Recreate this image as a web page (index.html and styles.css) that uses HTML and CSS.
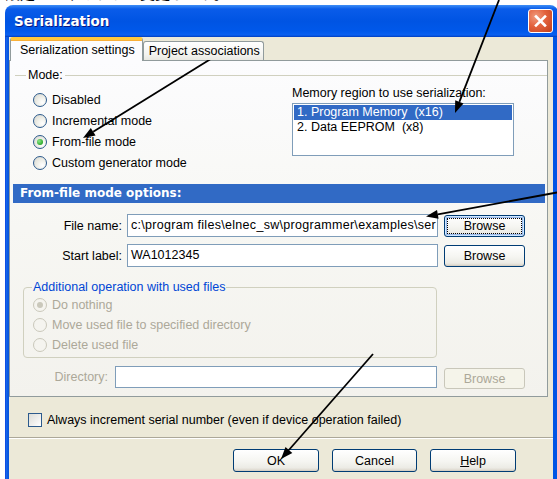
FILE: index.html
```html
<!DOCTYPE html>
<html lang="en">
<head>
<meta charset="utf-8">
<title>Serialization</title>
<link rel="stylesheet" href="styles.css">
</head>
<body>
<div class="screen">
  <div class="note"><span>設定は以下のように変更します。</span></div>
  <div class="window">
    <div class="titlebar">
      <span class="title">Serialization</span>
      <span class="close">
        <svg viewBox="0 0 25 24" width="25" height="24"><path d="M8 7.5 L17 16.5 M17 7.5 L8 16.5" stroke="#fff" stroke-width="2.6" stroke-linecap="square"/></svg>
      </span>
    </div>
    <div class="frame">
      <div class="client">
        <div class="tabs">
          <div class="tab active">Serialization settings</div>
          <div class="tab">Project associations</div>
        </div>
        <div class="panel">
          <div class="legend-line"><span>Mode:</span></div>
          <div class="mode-body">
            <div class="radio-list">
              <div class="radio"><span class="dot"></span>Disabled</div>
              <div class="radio"><span class="dot"></span>Incremental mode</div>
              <div class="radio on"><span class="dot"></span>From-file mode</div>
              <div class="radio"><span class="dot"></span>Custom generator mode</div>
            </div>
            <div class="memory">
              <div class="memory-label">Memory region to use serialization:</div>
              <div class="listbox">
                <div class="item selected">1. Program Memory&nbsp; (x16)</div>
                <div class="item">2. Data EEPROM&nbsp; (x8)</div>
              </div>
            </div>
          </div>
          <div class="section-head">From-file mode options:</div>
          <div class="field-row first">
            <span class="field-label">File name:</span>
            <div class="input wide path">c:\program files\elnec_sw\programmer\examples\ser</div>
            <button class="btn focus">Browse</button>
          </div>
          <div class="field-row second">
            <span class="field-label">Start label:</span>
            <div class="input wide">WA1012345</div>
            <button class="btn">Browse</button>
          </div>
          <fieldset class="group">
            <legend>Additional operation with used files</legend>
            <div class="radio off on"><span class="dot"></span>Do nothing</div>
            <div class="radio off"><span class="dot"></span>Move used file to specified directory</div>
            <div class="radio off"><span class="dot"></span>Delete used file</div>
          </fieldset>
          <div class="field-row dir">
            <span class="field-label muted">Directory:</span>
            <div class="input dir-input"></div>
            <button class="btn disabled">Browse</button>
          </div>
        </div>
        <div class="check-row">
          <span class="checkbox"></span>
          <span>Always increment serial number (even if device operation failed)</span>
        </div>
        <div class="separator"></div>
        <div class="buttons">
          <button class="btn cmd ok">OK</button>
          <button class="btn cmd cancel">Cancel</button>
          <button class="btn cmd help"><u>H</u>elp</button>
        </div>
      </div>
    </div>
  </div>
  <svg class="arrows" viewBox="0 0 557 479" width="557" height="479">
    <g stroke="#000" stroke-width="1.8" fill="none">
      <line x1="499" y1="0" x2="459.4" y2="101.8"/>
      <line x1="222" y1="52" x2="93.2" y2="131.7"/>
      <line x1="557" y1="192.5" x2="437.8" y2="214.3"/>
      <line x1="373" y1="354" x2="288.9" y2="450"/>
    </g>
    <g fill="#000">
      <polygon points="455,113 463.5,103.5 455.2,100.2"/>
      <polygon points="83,138 95.6,135.5 90.8,127.9"/>
      <polygon points="426,216.5 438.6,218.8 437,209.9"/>
      <polygon points="281,459 292.3,452.9 285.5,447"/>
    </g>
  </svg>
</div>
</body>
</html>
```
FILE: styles.css
```css
* { box-sizing: border-box; }

html, body {
  margin: 0;
  padding: 0;
}

body {
  width: 557px;
  height: 479px;
  overflow: hidden;
  background: #fff;
  font-family: "Liberation Sans", Arial, sans-serif;
  font-size: 12.5px;
  color: #000;
}

.screen {
  position: relative;
  width: 557px;
  height: 479px;
  overflow: hidden;
}

/* caption line above the dialog, only its lower edge is in view */
.note {
  height: 5px;
  overflow: hidden;
  padding-left: 5px;
}
.note span {
  display: block;
  font-family: "Noto Sans CJK JP", sans-serif;
  font-size: 15px;
  line-height: 20px;
  margin-top: -17px;
  white-space: nowrap;
}

/* window frame */
.window {
  margin-left: 5px;
  width: 553px;
  height: 474px;
  display: flex;
  flex-direction: column;
}

.titlebar {
  height: 32px;
  flex: none;
  display: flex;
  align-items: center;
  justify-content: space-between;
  padding: 0 5px 0 9px;
  border-radius: 8px 8px 0 0;
  background: linear-gradient(to bottom,
    #3E8EF6 0px, #0A5CE9 4px, #0054E3 16px, #0058EA 26px, #0A60F0 30px, #003DBE 32px);
}

.title {
  font-family: "DejaVu Sans", sans-serif;
  font-weight: bold;
  font-size: 13.5px;
  color: #fff;
  text-shadow: 1px 1px 0 #0A1883;
}

.close {
  width: 25px;
  height: 24px;
  border: 1px solid #fff;
  border-radius: 3px;
  background: radial-gradient(circle at 30% 30%, #F09B7E 0, #E3623D 45%, #C2401C 100%);
  display: flex;
}
.close svg { display: block; margin: -1px; }

.frame {
  flex: 1;
  display: flex;
  padding: 0 5px 0 4px;
  background: linear-gradient(to right, #0831D9 0, #166AEE 1px, #0855DD 3px, #0055E5 100%);
}

.client {
  flex: 1;
  background: #ECE9D8;
  display: flex;
  flex-direction: column;
}

/* tab strip */
.tabs {
  height: 23px;
  flex: none;
  display: flex;
  align-items: flex-end;
  padding-left: 1px;
  position: relative;
  z-index: 1;
}

.tab {
  height: 19px;
  padding: 2px 3px 0 5px;
  border: 1px solid #919B9C;
  border-bottom: none;
  border-radius: 3px 3px 0 0;
  background: linear-gradient(#FFFFFF, #F3F3EF 70%, #E9E8E1);
  line-height: 15px;
  white-space: nowrap;
}

.tab.active {
  height: 24px;
  margin-bottom: -1px;
  padding: 3px 7px 0 9px;
  border-top: 3px solid #FFC83C;
  background: #FCFCFE;
  box-shadow: inset 0 1px 0 #F9B03A;
}

/* tab page */
.panel {
  width: 539px;
  height: 337px;
  flex: none;
  border: 1px solid #919B9C;
  background: linear-gradient(#FCFCFE, #F7F7F3 50%, #F3F2ED);
  display: flex;
  flex-direction: column;
}

.legend-line {
  margin: 7px 0 0 5px;
  height: 14px;
  display: flex;
  align-items: center;
}
.legend-line::before {
  content: "";
  width: 11px;
  border-top: 1px solid #D0D0BF;
}
.legend-line::after {
  content: "";
  flex: 1;
  border-top: 1px solid #D0D0BF;
}
.legend-line span {
  padding: 0 2px;
  line-height: 14px;
}

.mode-body {
  height: 98px;
  margin-top: 4px;
  display: flex;
}

.radio-list {
  margin-left: 23px;
  width: 259px;
  padding-top: 3px;
}

.radio {
  height: 21px;
  display: flex;
  align-items: center;
  gap: 5px;
  white-space: nowrap;
}

.dot {
  position: relative;
  flex: none;
  width: 14px;
  height: 14px;
  border-radius: 50%;
  border: 1px solid #2C5A8C;
  background: radial-gradient(circle at 70% 70%, #FFFFFF 0, #F0F0EA 40%, #D4D4CC 100%);
}

.radio.on .dot::after {
  content: "";
  position: absolute;
  left: 3px;
  top: 3px;
  width: 6px;
  height: 6px;
  border-radius: 50%;
  background: radial-gradient(circle at 35% 35%, #8BE889, #21A121 80%);
}

.radio.off {
  height: 20px;
  color: #ACA899;
}
.radio.off .dot {
  border-color: #CAC8BB;
  background: #F5F4EF;
}
.radio.off.on .dot::after {
  background: #CAC8BB;
}

.memory {
  display: flex;
  flex-direction: column;
}

.memory-label {
  line-height: 14px;
  white-space: nowrap;
}

.listbox {
  margin-top: 3px;
  width: 222px;
  height: 53px;
  border: 1px solid #7F9DB9;
  background: #fff;
  padding: 1px;
}

.item {
  height: 15px;
  line-height: 15px;
  padding-left: 3px;
  white-space: nowrap;
}
.item.selected {
  background: #316AC5;
  color: #fff;
}

.section-head {
  height: 19px;
  margin: 0 2px 0 3px;
  padding-left: 7px;
  background: #316AC5;
  color: #fff;
  font-family: "DejaVu Sans", sans-serif;
  font-weight: bold;
  font-size: 12px;
  line-height: 19px;
}

.field-row {
  display: flex;
  align-items: center;
  height: 23px;
}
.field-row.first { margin-top: 11px; }
.field-row.second { margin-top: 7px; }

.field-label {
  width: 112px;
  text-align: right;
  white-space: nowrap;
}

.input {
  height: 23px;
  border: 1px solid #7F9DB9;
  background: #fff;
  padding: 0 3px;
  line-height: 21px;
  white-space: nowrap;
  overflow: hidden;
}
.input.wide {
  width: 311px;
  margin-left: 5px;
}
.input.path {
  letter-spacing: 0.3px;
}

.btn {
  font: inherit;
  color: #000;
  width: 81px;
  height: 22px;
  margin-left: 6px;
  padding: 0;
  border: 1px solid #003C74;
  border-radius: 3px;
  background: linear-gradient(#FFFFFF, #F5F5F1 55%, #ECEBE5 85%, #D8D2C6);
  box-shadow: inset 0 -1px 0 #D6D0C5;
  cursor: default;
}

.btn.focus {
  box-shadow: inset 0 0 0 1px #CEE7FF, inset 0 0 0 2px #98B8EA;
  outline: 1px dotted #000;
  outline-offset: -4px;
}

.btn.disabled {
  color: #ACA899;
  border-color: #C9C7BA;
  background: #F5F4EA;
  box-shadow: none;
}

/* additional operation group */
.group {
  margin: 13px 0 0 13px;
  width: 414px;
  height: 78px;
  padding: 1px 0 2px 9px;
  border: 1px solid #D0D0BF;
  border-radius: 4px;
  min-inline-size: 0;
}

.group legend {
  padding: 0 1px;
  margin-left: -1px;
  color: #0046D5;
  line-height: 14px;
  white-space: nowrap;
}

.field-row.dir {
  margin-top: 8px;
  align-items: flex-start;
}
.field-row.dir .field-label {
  width: 98px;
  line-height: 22px;
}
.muted { color: #ACA899; }

.input.dir-input {
  width: 322px;
  height: 22px;
  margin-left: 7px;
}
.field-row.dir .btn {
  margin-left: 7px;
  margin-top: 2px;
  height: 21px;
}

/* bottom of dialog */
.check-row {
  margin: 16px 0 0 19px;
  height: 14px;
  display: flex;
  align-items: center;
  gap: 5px;
  white-space: nowrap;
}

.checkbox {
  width: 14px;
  height: 14px;
  flex: none;
  border: 1px solid #2C5A8C;
  background: linear-gradient(135deg, #DCDCD7, #FFFFFF);
}

.separator {
  margin-top: 10px;
  height: 2px;
  border-top: 1px solid #ACA899;
  border-bottom: 1px solid #FFFFFF;
}

.buttons {
  margin-top: 10px;
  display: flex;
  justify-content: flex-end;
  gap: 13px;
  padding-right: 37px;
}

.btn.cmd {
  height: 23px;
  width: 86px;
  margin: 0;
}
.btn.cancel { width: 85px; }

/* callout arrows drawn over the dialog */
.arrows {
  position: absolute;
  left: 0;
  top: 0;
  pointer-events: none;
}
```
